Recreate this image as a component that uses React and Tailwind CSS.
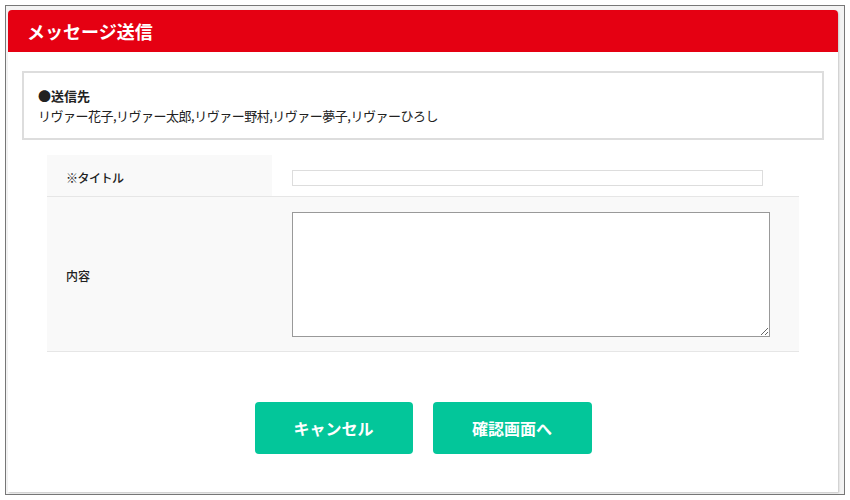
export default function App() {
  const recipients = ["リヴァー花子", "リヴァー太郎", "リヴァー野村", "リヴァー夢子", "リヴァーひろし"];

  return (
    <div className="w-[850px] h-[500px] bg-white p-[5px] font-['Noto_Sans_CJK_JP',sans-serif] text-[#222]">
      {/* window frame */}
      <div className="h-[490px] w-[840px] border border-[#777] bg-[#f3f3f3] pl-[2px] pt-[4px]">
        <div className="h-[482px] w-[830px] rounded-t-[4px] bg-white shadow-[1px_1px_2px_rgba(0,0,0,0.18)]">
          {/* header */}
          <div className="flex h-[42px] items-center rounded-t-[4px] bg-[#e50012] px-[19px]">
            <h1 className="text-[18px] font-bold text-white">メッセージ送信</h1>
          </div>

          {/* recipients */}
          <div className="mx-[14px] mt-[19px] flex h-[69px] flex-col justify-center border-2 border-[#ddd] pl-[14px]">
            <p className="text-[13px] font-bold leading-[20px]">●送信先</p>
            <p className="text-[13px] leading-[20px] tracking-[-0.5px]">{recipients.join(",")}</p>
          </div>

          {/* form */}
          <div className="mx-[39px] mt-[15px]">
            <div className="flex h-[42px] border-b border-[#e6e6e6]">
              <div className="flex w-[225px] items-center bg-[#f9f9f9] pl-[19px] pt-[4px] text-[12px] font-medium tracking-[-0.5px]">
                ※タイトル
              </div>
              <div className="flex flex-1 items-center bg-white pl-[20px] pt-[4px]">
                <input className="h-[16px] w-[471px] border border-[#ddd] bg-white" />
              </div>
            </div>
            <div className="flex h-[155px] border-b border-[#e6e6e6] bg-[#f9f9f9]">
              <div className="flex w-[225px] items-center pl-[19px] pt-[4px] text-[12px] font-medium">
                内容
              </div>
              <div className="flex flex-1 items-center pl-[20px]">
                <textarea className="h-[125px] w-[478px] resize border border-[#999] bg-white" />
              </div>
            </div>
          </div>

          {/* actions */}
          <div className="mt-[50px] flex justify-center gap-[20px]">
            <button className="h-[52px] w-[158px] rounded-[4px] bg-[#03c69a] text-[16px] font-bold text-white">
              キャンセル
            </button>
            <button className="h-[52px] w-[159px] rounded-[4px] bg-[#03c69a] text-[16px] font-bold text-white">
              確認画面へ
            </button>
          </div>
        </div>
      </div>
    </div>
  );
}
